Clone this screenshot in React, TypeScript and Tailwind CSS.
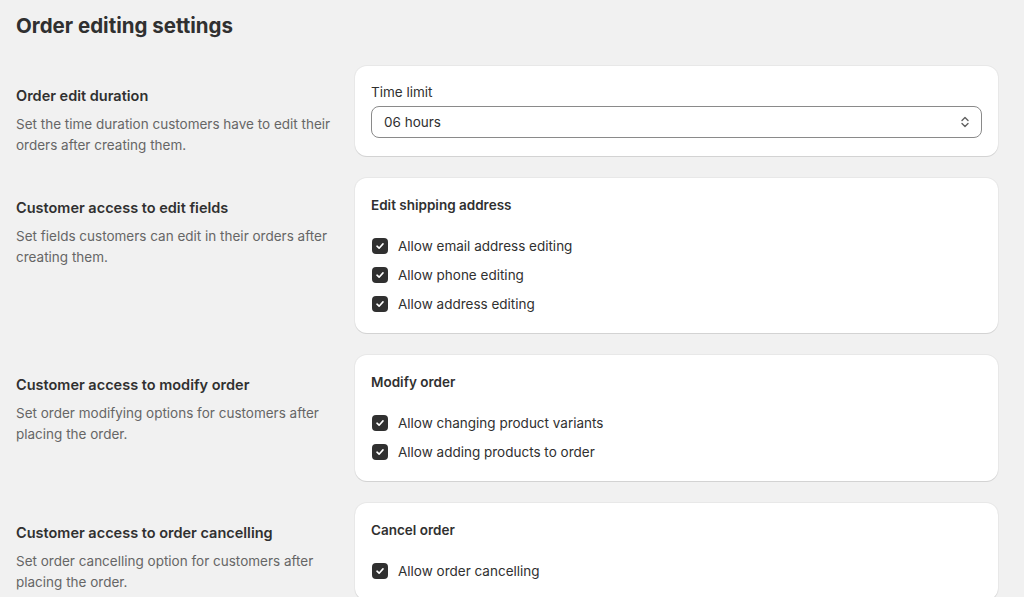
import React from 'react';

const sections = [
  {
    title: 'Customer access to edit fields',
    desc: 'Set fields customers can edit in their orders after creating them.',
    card: 'Edit shipping address',
    options: ['Allow email address editing', 'Allow phone editing', 'Allow address editing'],
  },
  {
    title: 'Customer access to modify order',
    desc: 'Set order modifying options for customers after placing the order.',
    card: 'Modify order',
    options: ['Allow changing product variants', 'Allow adding products to order'],
  },
  {
    title: 'Customer access to order cancelling',
    desc: 'Set order cancelling option for customers after placing the order.',
    card: 'Cancel order',
    options: ['Allow order cancelling'],
  },
];

function Checkbox({ label }: { label: string }) {
  return (
    <label className="flex items-center gap-[10px] h-5">
      <span className="w-4 h-4 ml-px rounded-[4px] bg-[#303030] flex items-center justify-center">
        <svg width="10" height="10" viewBox="0 0 10 10" fill="none">
          <path d="M2 5.2 4.1 7.2 8 2.9" stroke="#fff" strokeWidth="1.6" strokeLinecap="round" strokeLinejoin="round" />
        </svg>
      </span>
      <span className="text-[13.5px] leading-5 text-[#303030]">{label}</span>
    </label>
  );
}

function Intro({ title, desc }: { title: string; desc: string }) {
  return (
    <div className="w-[323px] pt-[18px]">
      <h2 className="text-[14.5px] leading-6 font-semibold text-[#303030]">{title}</h2>
      <p className="mt-[6px] text-[13.5px] leading-[21px] text-[#666666]">{desc}</p>
    </div>
  );
}

const card =
  'w-[643px] bg-white rounded-xl shadow-[0_1px_0_0_rgba(26,26,26,0.1),0_0_0_1px_rgba(26,26,26,0.04)] px-4';

export default function App() {
  return (
    <div
      className="min-h-screen bg-[#f1f1f1] pl-4 pt-3 pb-10"
      style={{ fontFamily: 'Inter, "Noto Sans", sans-serif' }}
    >
      <h1 className="text-[20.5px] leading-7 font-bold text-[#303030]">Order editing settings</h1>
      <div className="mt-[26px] flex flex-col gap-[22px]">
        <div className="flex gap-4">
          <Intro
            title="Order edit duration"
            desc="Set the time duration customers have to edit their orders after creating them."
          />
          <div className={`${card} pt-4 pb-[17px]`}>
            <div className="text-[13.5px] leading-5 text-[#303030]">Time limit</div>
            <div className="mt-1 h-8 rounded-lg border border-[#8a8a8a] flex items-center justify-between pl-3 pr-[10px]">
              <span className="text-[13.5px] text-[#303030]">06 hours</span>
              <svg width="12" height="16" viewBox="0 0 12 16" fill="none">
                <path d="M3 6.5 6 3.5 9 6.5M3 9.5 6 12.5 9 9.5" stroke="#616161" strokeWidth="1.4" strokeLinecap="round" strokeLinejoin="round" />
              </svg>
            </div>
          </div>
        </div>
        {sections.map((s) => (
          <div key={s.title} className="flex gap-4">
            <Intro title={s.title} desc={s.desc} />
            <div className={`${card} pt-[17px] pb-[19px]`}>
              <div className="text-[13.5px] leading-5 font-semibold text-[#303030]">{s.card}</div>
              <div className="mt-[21px] flex flex-col gap-[9px]">
                {s.options.map((o) => (
                  <Checkbox key={o} label={o} />
                ))}
              </div>
            </div>
          </div>
        ))}
      </div>
    </div>
  );
}
